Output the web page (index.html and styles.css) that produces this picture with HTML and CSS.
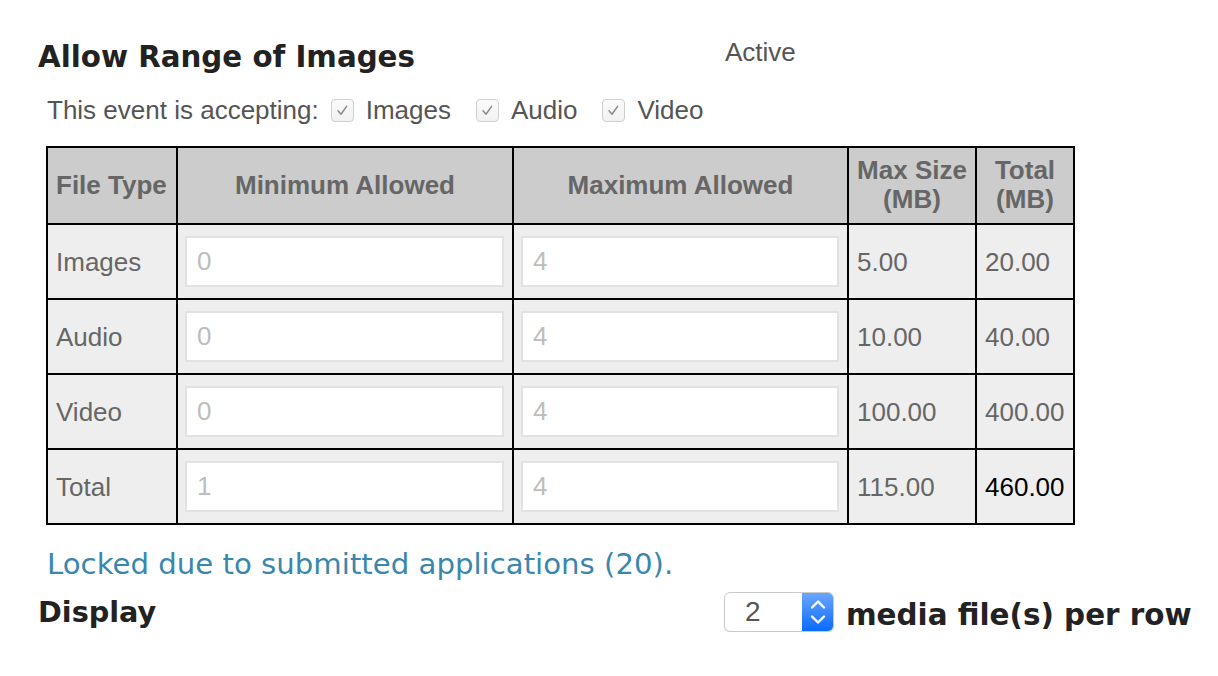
FILE: index.html
```html
<!DOCTYPE html>
<html lang="en">
<head>
<meta charset="utf-8">
<title>Allow Range of Images</title>
<link rel="stylesheet" href="styles.css">
</head>
<body>
<div class="page">
  <div class="head-row">
    <h2 class="title">Allow Range of Images</h2>
    <div class="status">Active</div>
  </div>

  <div class="accept">
    <span class="accept-label">This event is accepting:</span>
    <label class="opt">
      <span class="cb"><svg viewBox="0 0 23 23" width="23" height="23"><path d="M7 11.8 L10 15.2 L15.6 7.4" fill="none" stroke="#8a8a8a" stroke-width="1.5" stroke-linecap="round" stroke-linejoin="round"/></svg></span>
      <span>Images</span>
    </label>
    <label class="opt opt-gap">
      <span class="cb"><svg viewBox="0 0 23 23" width="23" height="23"><path d="M7 11.8 L10 15.2 L15.6 7.4" fill="none" stroke="#8a8a8a" stroke-width="1.5" stroke-linecap="round" stroke-linejoin="round"/></svg></span>
      <span>Audio</span>
    </label>
    <label class="opt opt-gap">
      <span class="cb"><svg viewBox="0 0 23 23" width="23" height="23"><path d="M7 11.8 L10 15.2 L15.6 7.4" fill="none" stroke="#8a8a8a" stroke-width="1.5" stroke-linecap="round" stroke-linejoin="round"/></svg></span>
      <span>Video</span>
    </label>
  </div>

  <table class="range">
    <colgroup>
      <col class="c-type">
      <col class="c-min">
      <col class="c-max">
      <col class="c-size">
      <col class="c-total">
    </colgroup>
    <thead>
      <tr>
        <th>File Type</th>
        <th>Minimum Allowed</th>
        <th>Maximum Allowed</th>
        <th>Max Size (MB)</th>
        <th>Total (MB)</th>
      </tr>
    </thead>
    <tbody>
      <tr>
        <td class="name">Images</td>
        <td class="in"><input class="field" type="text" placeholder="0" disabled></td>
        <td class="in"><input class="field" type="text" placeholder="4" disabled></td>
        <td class="num">5.00</td>
        <td class="num">20.00</td>
      </tr>
      <tr>
        <td class="name">Audio</td>
        <td class="in"><input class="field" type="text" placeholder="0" disabled></td>
        <td class="in"><input class="field" type="text" placeholder="4" disabled></td>
        <td class="num">10.00</td>
        <td class="num">40.00</td>
      </tr>
      <tr>
        <td class="name">Video</td>
        <td class="in"><input class="field" type="text" placeholder="0" disabled></td>
        <td class="in"><input class="field" type="text" placeholder="4" disabled></td>
        <td class="num">100.00</td>
        <td class="num">400.00</td>
      </tr>
      <tr>
        <td class="name">Total</td>
        <td class="in"><input class="field" type="text" placeholder="1" disabled></td>
        <td class="in"><input class="field" type="text" placeholder="4" disabled></td>
        <td class="num">115.00</td>
        <td class="num strong">460.00</td>
      </tr>
    </tbody>
  </table>

  <p class="locked">Locked due to submitted applications (20).</p>

  <div class="display-row">
    <h3 class="display-title">Display</h3>
    <div class="select">
      <span class="select-value">2</span>
      <span class="select-arrows">
        <svg viewBox="0 0 32 40" width="32" height="40"><path d="M10 15.5 L16 9.5 L22 15.5" fill="none" stroke="#fff" stroke-width="2.4" stroke-linecap="round" stroke-linejoin="round"/><path d="M10 24.5 L16 30.5 L22 24.5" fill="none" stroke="#fff" stroke-width="2.4" stroke-linecap="round" stroke-linejoin="round"/></svg>
      </span>
    </div>
    <span class="per-row">media file(s) per row</span>
  </div>
</div>
</body>
</html>
```

FILE: styles.css
```css
html, body {
  margin: 0;
  padding: 0;
  background: #ffffff;
}

body {
  font-family: "Liberation Sans", Arial, sans-serif;
  color: #555555;
}

.page {
  padding: 37px 0 0 38px;
}

.head-row {
  display: flex;
  align-items: flex-start;
}

.title {
  width: 687px;
  margin: 3px 0 0;
  font-family: "DejaVu Sans", Verdana, sans-serif;
  font-weight: bold;
  font-size: 29.3px;
  line-height: 34px;
  color: #222222;
}

.status {
  font-size: 26px;
  line-height: 30px;
  color: #555555;
}

.accept {
  display: flex;
  align-items: center;
  margin: 21px 0 0 9px;
  font-size: 26px;
  line-height: 30px;
  color: #555555;
}

.opt {
  display: flex;
  align-items: center;
  gap: 12px;
  margin-left: 12px;
}

.opt-gap {
  margin-left: 25px;
}

.cb {
  display: block;
  flex: 0 0 auto;
  width: 23px;
  height: 23px;
  box-sizing: border-box;
  border: 1px solid #cfcfcf;
  border-radius: 4px;
  background: linear-gradient(#fbfbfb, #f1f1f1);
}

.cb svg {
  display: block;
  margin: -1px 0 0 -1px;
}

.range {
  margin: 21px 0 0 8px;
  border-collapse: collapse;
  border: 2px solid #000000;
  width: 1027px;
  table-layout: fixed;
}

.c-type { width: 130px; }
.c-min { width: 336px; }
.c-max { width: 335px; }
.c-size { width: 128px; }
.c-total { width: 98px; }

.range th,
.range td {
  border: 2px solid #000000;
}

.range th {
  background: #cccccc;
  color: #666666;
  font-weight: bold;
  font-size: 26px;
  line-height: 29px;
  padding: 8px 8px 9px;
  text-align: center;
}

.range th:first-child {
  padding: 8px 4px 9px 8px;
  text-align: left;
}

.range td {
  background: #eeeeee;
  font-size: 26px;
  line-height: 30px;
  color: #666666;
  padding: 11px 8px 11px 8px;
  vertical-align: middle;
}

.range td.in {
  padding: 11px 8px 11px 7px;
}

.field {
  display: block;
  width: 100%;
  height: 51px;
  box-sizing: border-box;
  margin: 0;
  border: 2px solid #e2e2e2;
  background: #ffffff;
  font-family: "Liberation Sans", Arial, sans-serif;
  font-size: 26px;
  padding: 0 0 0 10px;
  color: #bbbbbb;
  outline: none;
}

.field::placeholder {
  color: #bdbdbd;
  opacity: 1;
}

.range td.strong {
  color: #000000;
}

.locked {
  margin: 22px 0 0 9px;
  font-family: "DejaVu Sans", Verdana, sans-serif;
  font-size: 29.2px;
  line-height: 34px;
  color: #3a87ad;
}

.display-row {
  display: flex;
  align-items: center;
  margin-top: 11px;
  height: 40px;
}

.display-title {
  width: 686px;
  margin: 0;
  font-family: "DejaVu Sans", Verdana, sans-serif;
  font-weight: bold;
  font-size: 28.7px;
  line-height: 34px;
  color: #222222;
}

.select {
  display: flex;
  width: 110px;
  height: 40px;
  box-sizing: border-box;
  border: 1px solid #cacaca;
  border-radius: 6px;
  background: #ffffff;
  overflow: hidden;
  box-shadow: 0 1px 1px rgba(0, 0, 0, 0.08);
}

.select-value {
  flex: 1;
  padding-left: 20px;
  font-size: 28px;
  line-height: 38px;
  color: #555555;
}

.select-arrows {
  display: block;
  width: 31px;
  height: 38px;
  background: linear-gradient(#69a6ff, #0a6aff);
}

.select-arrows svg {
  display: block;
  margin-top: -1px;
}

.per-row {
  margin-left: 12px;
  font-family: "DejaVu Sans", Verdana, sans-serif;
  font-weight: bold;
  font-size: 29.4px;
  line-height: 34px;
  color: #222222;
  padding-top: 5px;
}
```
